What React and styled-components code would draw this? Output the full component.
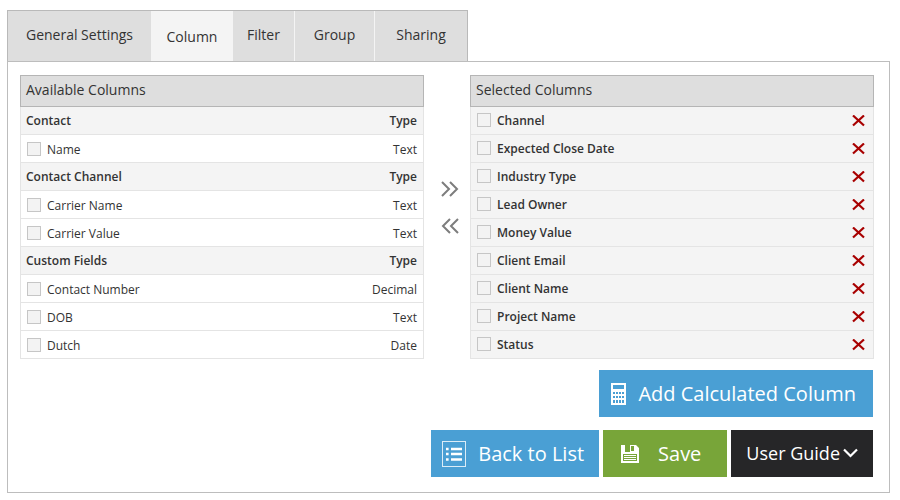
import React, { useState } from "react";
import styled, { createGlobalStyle } from "styled-components";

const GlobalStyle = createGlobalStyle`
  *, *::before, *::after { box-sizing: border-box; }
  body {
    margin: 0;
    background: #fff;
    color: #333;
    font-family: "Open Sans", "Noto Sans", sans-serif;
    font-size: 12px;
  }
  button, input { font-family: inherit; margin: 0; }
`;

const Page = styled.main`
  padding: 10px 10px 7px 7px;
`;

const TabBar = styled.nav`
  display: flex;
  width: fit-content;
  border: 1px solid #b9b9b9;
  border-bottom: 0;
`;

const Tab = styled.button`
  height: 50px;
  width: ${(p) => p.$width}px;
  padding: ${(p) => (p.$active ? "2px 0 0" : "0 0 2px")};
  border: 0;
  border-left: ${(p) => (p.$divided ? "1px solid #f4f4f4" : "0")};
  background: ${(p) => (p.$active ? "#f4f4f4" : "#dedede")};
  color: #333;
  font-size: 14px;
  line-height: 20px;
  cursor: pointer;
`;

const Panel = styled.section`
  border: 1px solid #bdbdbd;
  padding: 13px 15px 15px 12px;
`;

const Columns = styled.div`
  display: grid;
  grid-template-columns: 1fr 46px 1fr;
`;

const Table = styled.table`
  width: 100%;
  border-collapse: separate;
  border-spacing: 0;
  color: #333;
`;

const TitleCell = styled.th`
  height: 32px;
  padding: 0 5px 2px;
  border: 1px solid #b5b5b5;
  background: #dedede;
  font-size: 14px;
  line-height: 20px;
  font-weight: 400;
  text-align: left;
`;

const Cell = styled.td`
  height: 28px;
  padding: ${(p) => (p.$shaded ? "0 6px 0 5px" : "2px 6px 0")};
  border-bottom: 1px solid #e4e4e4;
  background: ${(p) => (p.$shaded ? "#f4f4f4" : "#fff")};
  font-weight: ${(p) => (p.$shaded ? 600 : 400)};
  line-height: 16px;
  text-align: left;
  &:first-child { border-left: 1px solid #e4e4e4; }
  &:last-child { border-right: 1px solid #e4e4e4; text-align: right; }
`;

const SelectedCell = styled(Cell)`
  padding: 0 7px 0 6px;
`;

const Option = styled.label`
  display: flex;
  align-items: flex-start;
  gap: 6px;
`;

const Check = styled.input`
  appearance: none;
  width: 14px;
  height: 14px;
  border: 1px solid #c6c6c6;
  background: #f3f3f3;
  &:checked { background: #4a9fd4; }
`;

const Movers = styled.div`
  display: flex;
  flex-direction: column;
  align-items: center;
  gap: 17px;
  padding: 104px 0 0 6px;
`;

const IconButton = styled.button`
  display: flex;
  padding: 2px;
  border: 0;
  background: none;
  cursor: pointer;
`;

const RemoveButton = styled(IconButton)`
  margin-left: auto;
  padding: 1px;
`;

const Actions = styled.div`
  display: flex;
  justify-content: flex-end;
  gap: 4px;
  margin-top: ${(p) => p.$top}px;
  padding-right: 1px;
`;

const Action = styled.button`
  display: flex;
  align-items: center;
  gap: ${(p) => p.$gap}px;
  height: 47px;
  padding: ${(p) => p.$pad};
  border: 0;
  background: ${(p) => p.$color};
  color: #fff;
  font-size: ${(p) => p.$size || 20}px;
  font-weight: 400;
  line-height: 26px;
  white-space: nowrap;
  cursor: pointer;
  svg { flex: none; }
`;

const ChevronsIcon = ({ left }) => (
  <svg width="18" height="16" viewBox="0 0 18 16" fill="none" stroke="#7d7d7d" strokeWidth="2">
    {left ? <path d="M9 1 2 8l7 7M17 1l-7 7 7 7" /> : <path d="M1 1l7 7-7 7M9 1l7 7-7 7" />}
  </svg>
);

const CrossIcon = () => (
  <svg width="13" height="12" viewBox="0 0 13 12" fill="none" stroke="#a80000" strokeWidth="2.2">
    <path d="M1 .5l11 10M12 .5l-11 10" />
  </svg>
);

const CalculatorIcon = () => (
  <svg width="15" height="22" viewBox="0 0 15 22">
    <path
      fill="#fff"
      fillRule="evenodd"
      d="M0 0h15v22H0zM2 2v4h11V2zM2 9v2h2V9zM5 9v2h2V9zM8 9v2h2V9zM11 9v2h2V9zM2 13v2h2v-2zM5 13v2h2v-2zM8 13v2h2v-2zM11 13v2h2v-2zM2 17v3h2v-3zM5 17v3h2v-3zM8 17v3h2v-3zM11 17v3h2v-3z"
    />
  </svg>
);

const ListIcon = () => (
  <svg width="24" height="26" viewBox="0 0 24 26" fill="none" stroke="#fff">
    <rect x=".5" y=".5" width="23" height="25" opacity=".8" />
    <path strokeWidth="2.600" d="M4 8h2.600M4 13h2.600M4 18.500h2.600M9 8h11M9 13h11M9 18.500h11" />
  </svg>
);

const SaveIcon = () => (
  <svg width="18" height="18" viewBox="0 0 18 18">
    <path
      fill="#fff"
      fillRule="evenodd"
      d="M0 0h4v7h5V0h6l3 3v15H0zM10 1v5h3V1zM2 9v7h14V9z"
    />
    <path stroke="#fff" d="M3 10.500h12M3 12.500h12M3 14.500h12" />
  </svg>
);

const ChevronDownIcon = () => (
  <svg width="15" height="10" viewBox="0 0 15 10" fill="none" stroke="#fff" strokeWidth="2.2">
    <path d="M1 1.500l6.500 6.500 6.500-6.500" />
  </svg>
);

const tabs = [
  { name: "General Settings", width: 143 },
  { name: "Column", width: 82 },
  { name: "Filter", width: 61 },
  { name: "Group", width: 80, divided: true },
  { name: "Sharing", width: 93, divided: true },
];

const available = [
  { name: "Contact", type: "Type", group: true },
  { name: "Name", type: "Text" },
  { name: "Contact Channel", type: "Type", group: true },
  { name: "Carrier Name", type: "Text" },
  { name: "Carrier Value", type: "Text" },
  { name: "Custom Fields", type: "Type", group: true },
  { name: "Contact Number", type: "Decimal" },
  { name: "DOB", type: "Text" },
  { name: "Dutch", type: "Date" },
];

const selected = [
  "Channel",
  "Expected Close Date",
  "Industry Type",
  "Lead Owner",
  "Money Value",
  "Client Email",
  "Client Name",
  "Project Name",
  "Status",
];

export default function App() {
  const [active, setActive] = useState("Column");
  return (
    <Page>
      <GlobalStyle />
      <TabBar>
        {tabs.map((t) => (
          <Tab
            key={t.name}
            type="button"
            $width={t.width}
            $divided={t.divided}
            $active={t.name === active}
            onClick={() => setActive(t.name)}
          >
            {t.name}
          </Tab>
        ))}
      </TabBar>
      <Panel>
        <Columns>
          <Table>
            <thead>
              <tr>
                <TitleCell colSpan={2}>Available Columns</TitleCell>
              </tr>
            </thead>
            <tbody>
              {available.map((row) => (
                <tr key={row.name}>
                  <Cell as={row.group ? "th" : "td"} $shaded={row.group}>
                    {row.group ? (
                      row.name
                    ) : (
                      <Option>
                        <Check type="checkbox" />
                        {row.name}
                      </Option>
                    )}
                  </Cell>
                  <Cell as={row.group ? "th" : "td"} $shaded={row.group}>
                    {row.type}
                  </Cell>
                </tr>
              ))}
            </tbody>
          </Table>
          <Movers>
            <IconButton type="button" aria-label="Add to selected">
              <ChevronsIcon />
            </IconButton>
            <IconButton type="button" aria-label="Remove from selected">
              <ChevronsIcon left />
            </IconButton>
          </Movers>
          <Table>
            <thead>
              <tr>
                <TitleCell colSpan={2}>Selected Columns</TitleCell>
              </tr>
            </thead>
            <tbody>
              {selected.map((name) => (
                <tr key={name}>
                  <SelectedCell $shaded>
                    <Option>
                      <Check type="checkbox" />
                      {name}
                    </Option>
                  </SelectedCell>
                  <SelectedCell $shaded>
                    <RemoveButton type="button" aria-label={`Remove ${name}`}>
                      <CrossIcon />
                    </RemoveButton>
                  </SelectedCell>
                </tr>
              ))}
            </tbody>
          </Table>
        </Columns>
        <Actions $top={11}>
          <Action type="button" $color="#4a9fd4" $gap={12} $pad="0 17px 0 12px">
            <CalculatorIcon />
            Add Calculated Column
          </Action>
        </Actions>
        <Actions $top={13}>
          <Action type="button" $color="#4a9fd4" $gap={12} $pad="0 15px 0 11px">
            <ListIcon />
            Back to List
          </Action>
          <Action type="button" $color="#78a539" $gap={19} $pad="0 26px 0 18px">
            <SaveIcon />
            Save
          </Action>
          <Action type="button" $color="#262628" $gap={3} $pad="0 15px 2px" $size={18}>
            User Guide
            <ChevronDownIcon />
          </Action>
        </Actions>
      </Panel>
    </Page>
  );
}
